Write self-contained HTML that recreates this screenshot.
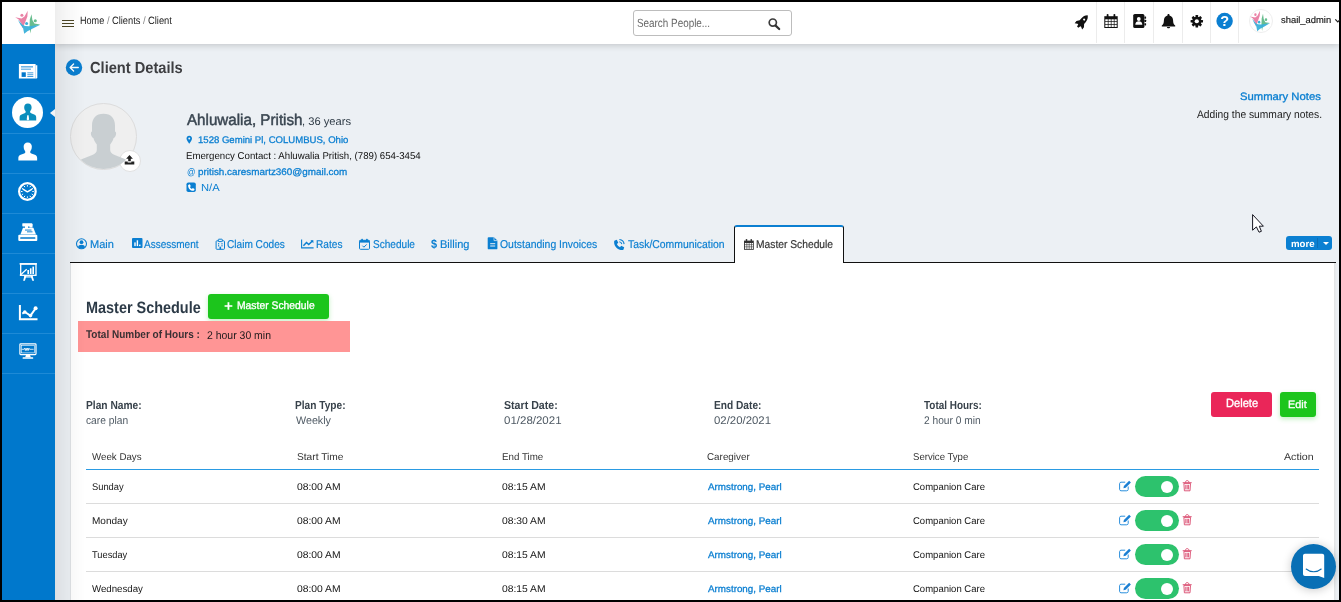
<!DOCTYPE html>
<html lang="en">
<head>
<meta charset="utf-8">
<title>Client Details - Master Schedule</title>
<style>
html,body{margin:0;padding:0}
body{width:1341px;height:602px;overflow:hidden;background:#000;position:relative;font-family:"Liberation Sans",sans-serif}
.abs,.t,#app,#app div{position:absolute}
#app{left:2px;top:2px;width:1337px;height:598px;background:#ecf0f4;overflow:hidden}
/* coordinates inside #app are page coords minus 2 */
#logo{left:0;top:0;width:53px;height:42px;background:#fff}
#side{left:0;top:42px;width:53px;height:556px;background:#0078cc}
#side .sep{left:0;width:53px;height:1px;background:#1e8ad6}
#side .act{left:10px;top:53px;width:31px;height:31px;border-radius:50%;background:#fff}
#side .notch{left:48px;top:65px;width:0;height:0;border-top:4.5px solid transparent;border-bottom:4.5px solid transparent;border-right:5px solid #f1f3f6}
#top{left:52px;top:0;width:1284px;height:42px;background:#fff;border-left:1px solid #d6dce4;box-shadow:0 1px 7px rgba(0,0,0,.2)}
#top .vs{top:0;width:1px;height:41px;background:#ececec}
#search{left:578px;top:8px;width:157px;height:24px;border:1px solid #bdbdbd;border-radius:3px;background:#fff}
#avatar{left:1194px;top:7px;width:22px;height:22px;border-radius:50%;background:#fff;border:1px solid #eee}
#sideshadow{left:53px;top:0;width:30px;height:598px;background:linear-gradient(to right,rgba(0,0,0,.065),rgba(0,0,0,.03) 40%,rgba(0,0,0,0));z-index:5}
#pic{left:68px;top:101px;width:65px;height:65px;border-radius:50%;background:#efefef;border:1px solid #dcdcdc;overflow:hidden}
#upl{left:117px;top:148px;width:20px;height:20px;border-radius:50%;background:#fff;border:1px solid #e1e1e1}
#panel{left:68px;top:261px;width:1263px;height:340px;background:#fff;border-left:1px solid #dfe2e5}
#tabline{left:68px;top:260px;width:1266px;height:1px;background:#111}
#tabact{left:732px;top:223px;width:108px;height:36px;background:#fff;border:1px solid #111;border-top:2px solid #0b7fd1;border-bottom:none;border-radius:3px 3px 0 0}
#more{left:1284px;top:234px;width:46px;height:14px;border-radius:3px;background:#0b80d2}
#more .dv{left:31px;top:2px;width:1px;height:10px;background:#0a6fb8}
#more .cr{left:36.5px;top:6px;width:0;height:0;border-left:3px solid transparent;border-right:3px solid transparent;border-top:3.5px solid #fff}
.btn{border-radius:3px}
#addms{left:206px;top:292px;width:121px;height:25px;background:#1cc51c;box-shadow:0 2px 5px rgba(28,197,28,.28)}
#pink{left:76px;top:319px;width:272px;height:31px;background:#ff9595}
#del{left:1209px;top:390px;width:61px;height:25px;background:#ea2659}
#edit{left:1278px;top:390px;width:36px;height:25px;background:#1cc51c;box-shadow:0 2px 5px rgba(28,197,28,.28)}
#thline{left:84px;top:467px;width:1233px;height:1px;background:#2a9be3}
.rl{left:84px;width:1233px;height:1px;background:#dcdcdc}
.tog{left:1133px;width:44px;height:21px;border-radius:11px;background:#2dc26d}
.tog b{position:absolute;left:25.5px;top:4.5px;width:12.5px;height:12.5px;border-radius:50%;background:#fff}
#rstrip{left:1332px;top:261px;width:3px;height:340px;background:linear-gradient(to right,#e2e3e4,#ecf0f4)}
#chat{left:1289px;top:542px;width:45px;height:45px;border-radius:50%;background:#086fb5;box-shadow:0 1px 10px rgba(0,0,0,.22)}
svg#ic{position:absolute;left:0;top:0;width:1341px;height:602px;pointer-events:none;will-change:transform}
.t{white-space:nowrap;line-height:1;margin:0;padding:0;transform-origin:0 0;text-rendering:geometricPrecision}
#txt{position:absolute;left:0;top:0;width:1341px;height:602px;will-change:transform}
.pb{display:inline-block;width:0;height:0}
</style>
</head>
<body>
<div id="app">
  <div id="side">
    <div class="sep" style="top:49px"></div><div class="sep" style="top:89px"></div><div class="sep" style="top:129px"></div><div class="sep" style="top:169px"></div><div class="sep" style="top:209px"></div><div class="sep" style="top:249px"></div><div class="sep" style="top:289px"></div><div class="sep" style="top:329px"></div>
    <div class="act"></div><div class="notch"></div>
  </div>
  <div id="sideshadow"></div>
  <div id="pic"></div><div id="upl"></div>
  <div id="panel"></div><div id="rstrip"></div>
  <div id="tabline"></div><div id="tabact"></div>
  <div id="more"><div class="dv"></div><div class="cr"></div></div>
  <div id="addms" class="btn"></div>
  <div id="pink"></div>
  <div id="del" class="btn"></div><div id="edit" class="btn"></div>
  <div id="thline"></div>
  <div class="rl" style="top:501px"></div><div class="rl" style="top:535px"></div><div class="rl" style="top:569px"></div>
  <div class="tog" style="top:474px"><b></b></div><div class="tog" style="top:508px"><b></b></div><div class="tog" style="top:542px"><b></b></div><div class="tog" style="top:576px"><b></b></div>
  <div id="top">
    <div class="vs" style="left:1041px"></div><div class="vs" style="left:1069px"></div><div class="vs" style="left:1098px"></div><div class="vs" style="left:1127px"></div><div class="vs" style="left:1155px"></div><div class="vs" style="left:1183px"></div>
    <div id="search"></div>
    <div id="avatar"></div>
  </div>
  <div id="logo"></div>
  <div id="chat"></div>
</div>
<svg id="ic" viewBox="0 0 1341 602">
<!-- logo -->
<g id="lg">
<g opacity=".92">
<polygon fill="#e8789f" points="15.2,17.2 21.6,18.4 24.5,16.6 27.7,10.8 27.4,16.6 25.1,22.4 22.5,28.3 21.6,24.2 18.7,19.5"/>
<circle fill="#e8789f" cx="21.9" cy="15.3" r="1.5"/>
<polygon fill="#5cb886" points="31.5,14.3 32.4,20.1 34.4,23.6 40.2,24.5 35,25.9 31.5,27.1 30.3,33.5 29.5,27.1 29.8,19.5"/>
<circle fill="#5cb886" cx="35.3" cy="20.8" r="1.55"/>
<polygon fill="#2aaad6" opacity=".95" points="17.8,19.8 22.5,24.8 25.1,25.9 29.2,26.2 40.2,24.8 33.3,28.3 27.4,31.2 24.2,33.8 23.1,28.3 20.5,24.8"/>
<circle fill="#2aaad6" cx="26.6" cy="23.6" r="1.5"/>
</g>
</g>
<!-- avatar logo (scaled copy) -->
<use href="#lg" transform="translate(1260 21) scale(.79 .9) translate(-27.7 -22.3)"/>
<!-- hamburger -->
<g stroke="#4d4726" stroke-width="1"><path d="M62 20.5h12M62 23.5h12M62 26.5h12"/></g>
<!-- back circle -->
<circle cx="74" cy="67.5" r="8.2" fill="#0b7fd1"/>
<path d="M78.3 67.5h-8.2M73.6 64l-3.5 3.5 3.5 3.5" fill="none" stroke="#fff" stroke-width="1.3" stroke-linecap="round" stroke-linejoin="round"/>
<!-- search icon -->
<circle cx="772.8" cy="22.6" r="3.6" fill="none" stroke="#3c3c3c" stroke-width="1.7"/>
<path d="M775.6 25.6l3.6 3.4" stroke="#333" stroke-width="2.2" stroke-linecap="round"/>
<!-- rocket -->
<g transform="translate(1082.400 21.600) rotate(40)">
<path fill="#111" d="M0-8.200c2 1.600 2.900 4 2.900 6.600v2.400l2 2.600v2.800l-2.600-1.400h-.9l-.5 2.500h-1.800l-.5-2.500h-.9l-2.600 1.400v-2.800l2-2.600v-2.400c0-2.600 .9-5 2.900-6.600z"/>
<circle cx="0" cy="-2.700" r="1.050" fill="#fff"/>
</g>
<!-- calendar top -->
<g fill="#111">
<path d="M1104.300 16.200h13.400v11.800h-13.400z"/>
<rect x="1106.700" y="14" width="1.800" height="3.600" rx=".8"/><rect x="1113.500" y="14" width="1.800" height="3.600" rx=".8"/>
</g>
<g fill="#fff">
<rect x="1105.300" y="19.300" width="2.500" height="2.000"/><rect x="1108.500" y="19.300" width="2.300" height="2.000"/><rect x="1111.500" y="19.300" width="2.300" height="2.000"/><rect x="1114.500" y="19.300" width="2.200" height="2.000"/>
<rect x="1105.300" y="22.000" width="2.500" height="2.100"/><rect x="1108.500" y="22.000" width="2.300" height="2.100"/><rect x="1111.500" y="22.000" width="2.300" height="2.100"/><rect x="1114.500" y="22.000" width="2.200" height="2.100"/>
<rect x="1105.300" y="24.800" width="2.500" height="2.200"/><rect x="1108.500" y="24.800" width="2.300" height="2.200"/><rect x="1111.500" y="24.800" width="2.300" height="2.200"/><rect x="1114.500" y="24.800" width="2.200" height="2.200"/>
</g>
<!-- address book -->
<rect x="1133.200" y="14" width="11.200" height="14" rx="1.600" fill="#111"/>
<g fill="#111"><rect x="1144.400" y="16.400" width="1.700" height="2.300" rx=".4"/><rect x="1144.400" y="19.800" width="1.700" height="2.300" rx=".4"/><rect x="1144.400" y="23.200" width="1.700" height="2.300" rx=".4"/></g>
<circle cx="1138.800" cy="19" r="1.900" fill="#fff"/>
<path d="M1135.300 24.800c0-2.600 1.500-3.600 3.500-3.600s3.500 1 3.500 3.600z" fill="#fff"/>
<!-- bell -->
<path fill="#111" d="M1168.500 14c.6 0 1 .4 1 1v.4c2.300 .5 3.600 2.400 3.600 5.000 0 2.800 .8 3.900 2.100 5.100v.9h-13.400v-.9c1.300-1.200 2.100-2.300 2.100-5.100 0-2.600 1.300-4.500 3.600-5v-.4c0-.6 .4-1 1-1zM1166.900 26.900h3.200c0 .8-.7 1.400-1.600 1.400s-1.600-.6-1.600-1.400z"/>
<!-- gear -->
<g transform="translate(1196.800 21.250)">
<g fill="#111">
<rect x="-1.300" y="-6.200" width="2.600" height="12.400" rx=".5"/>
<rect x="-1.300" y="-6.200" width="2.600" height="12.400" rx=".5" transform="rotate(45)"/>
<rect x="-1.300" y="-6.200" width="2.600" height="12.400" rx=".5" transform="rotate(90)"/>
<rect x="-1.300" y="-6.200" width="2.600" height="12.400" rx=".5" transform="rotate(135)"/>
<circle r="4.600"/>
</g>
<circle r="2.100" fill="#fff"/>
</g>
<!-- help -->
<circle cx="1224.600" cy="21.050" r="8.200" fill="#0b7fd1"/>
<text x="1224.600" y="26.200" font-family="Liberation Sans, sans-serif" font-size="14.5" font-weight="700" fill="#fff" text-anchor="middle">?</text>
<!-- user caret -->
<path d="M1335.300 19.400l2.500 2.500 2-2" fill="none" stroke="#222" stroke-width="1.200"/>
<!-- sidebar: newspaper -->
<g fill="#fff">
<path d="M18.900 64h16.700v14.500h-16.700z"/><path d="M35.500 65.300h1.800v12.200c0 .6-.4 1-1 1h-.8z"/>
</g>
<g fill="#2f93da">
<rect x="21" y="66.300" width="12" height="1.100"/><rect x="21" y="68.700" width="10" height=".9"/>
<rect x="27.300" y="72.400" width="6" height=".9"/><rect x="27.300" y="74.300" width="6" height=".9"/><rect x="27.300" y="76.100" width="6" height=".9"/>
</g>
<rect x="21.600" y="72.300" width="4.200" height="4.600" fill="#0078cc"/>
<!-- sidebar: active client (teal) -->
<g fill="#0a8ebd">
<path d="M27.900 103.500c2.400 0 3.700 1.500 3.700 3.700 0 1.300-.3 2.600-1.100 3.600-.3 .4-.4 .8-.4 1.200 0 .6 .4 1 1.100 1.300l3 1.200c1.300 .5 2 1.500 2 2.900v3h-16.600v-3c0-1.400 .7-2.400 2-2.900l3-1.200c.7-.3 1.100-.7 1.100-1.300 0-.4-.1-.8-.4-1.200-.8-1-1.100-2.300-1.100-3.600 0-2.200 1.300-3.700 3.700-3.700z"/>
</g>
<path d="M27.200 115.300h1.400l.5 4.100-1.200 1.200-1.200-1.200z" fill="#fff"/>
<!-- sidebar: person -->
<path fill="#fff" d="M27.750 142.600c2.600 0 4.100 1.700 4.100 4.100 0 1.500-.4 2.900-1.200 4-.3 .4-.5 .9-.5 1.300 0 .7 .5 1.100 1.200 1.400l3.500 1.400c1.500 .6 2.300 1.700 2.300 3.300v2.500h-18.800v-2.500c0-1.600 .8-2.700 2.300-3.300l3.500-1.400c.7-.3 1.200-.7 1.200-1.400 0-.4-.2-.9-.5-1.300-.8-1.100-1.200-2.500-1.200-4 0-2.400 1.500-4.100 4.100-4.100z"/>
<!-- sidebar: clock -->
<circle cx="27.400" cy="191.500" r="8.300" fill="none" stroke="#fff" stroke-width="2.200"/>
<g stroke="#fff" stroke-width="1" stroke-linecap="butt">
<path d="M27.400 185.100v1.500M27.400 196.400v1.500M21 191.500h1.500M32.300 191.500h1.500M24.200 186l.7 1.200M30.600 186l-.7 1.200M24.200 197l.7-1.200M30.600 197l-.7-1.200M21.900 188.300l1.200 .7M32.900 188.300l-1.200 .7M21.900 194.700l1.200-.7M32.900 194.700l-1.200-.7"/>
</g>
<path d="M23.300 189.300l4.100 2.500 4.300-2.500" fill="none" stroke="#fff" stroke-width="1.500" stroke-linecap="round" stroke-linejoin="round"/>
<!-- sidebar: cash register -->
<g fill="#fff">
<rect x="22.300" y="223.200" width="10" height="3.200" rx=".6"/><rect x="29.500" y="224" width="3" height="3.600"/>
<rect x="25" y="226" width="3" height="2.200"/>
<path d="M23 227.700h10.400l2.600 6.700h-15.600z"/>
<rect x="18.300" y="234.700" width="19" height="6.200" rx="1"/>
</g>
<g fill="#0078cc"><rect x="20.200" y="237.300" width="15.200" height="1.400" rx=".5"/><rect x="25" y="229.600" width="6.500" height=".9"/><rect x="27" y="231.400" width="5.500" height=".9"/></g>
<!-- sidebar: presentation -->
<g fill="none" stroke="#fff">
<rect x="20.700" y="264" width="15.300" height="11.300" stroke-width="1.300"/>
</g>
<g fill="#fff">
<rect x="19.600" y="263.100" width="17.300" height="1.500"/>
<rect x="27.400" y="270" width="1.600" height="4"/><rect x="29.900" y="268.300" width="1.600" height="5.700"/><rect x="32.400" y="266.600" width="1.600" height="7.400"/>
<path d="M24.600 275.300h2l-1.700 5.500h-1.800zM30.400 275.300h2l1.700 5.500h-1.800z"/>
<rect x="24" y="276.300" width="8.600" height="1.200"/>
</g>
<path d="M19.900 275.500l6.800-6.300" stroke="#fff" stroke-width="1.200"/>
<!-- sidebar: line chart -->
<path d="M19.900 305v14.300h17.600" fill="none" stroke="#fff" stroke-width="2"/>
<path d="M22.300 313.600l2.500-1.600 5.700 3.600 5.100-7.200" fill="none" stroke="#fff" stroke-width="1.900" stroke-linejoin="round"/>
<g fill="#fff"><circle cx="24.800" cy="312" r="1.800"/><circle cx="30.500" cy="315.600" r="1.800"/><circle cx="35.600" cy="308.300" r="2"/></g>
<!-- sidebar: monitor -->
<rect x="19.900" y="343.800" width="16.100" height="10.800" rx=".8" fill="none" stroke="#fff" stroke-width="1.200"/>
<rect x="21.600" y="345.500" width="12.700" height="7.400" fill="none" stroke="#fff" stroke-width=".6"/>
<path d="M21.600 349.300h2.500l.6-1.200 .7 2.400 .7-2.400 .7 2.400 .7-2.400 .7 2.400 .7-2.400 .7 1.200h4" fill="none" stroke="#fff" stroke-width=".8"/>
<path d="M26 355h4l.8 2.300h-5.600z" fill="#fff"/><rect x="22.600" y="357.300" width="10.600" height="1.400" rx=".5" fill="#fff"/>
<!-- profile silhouette -->
<g id="sil">
<clipPath id="cp"><circle cx="103.500" cy="136.500" r="32.500"/></clipPath>
<g clip-path="url(#cp)" fill="#c9cfd2">
<path d="M103.500 113.700c7.500 0 11.500 4.600 11.500 11.700v6.200c1.200 .4 1.400 2.100 .7 4-.5 1.500-1.300 2.400-2.100 2.500-.7 2.700-1.900 4.800-3.400 6.300v5.600c0 2.300 1.400 3.700 4.500 4.900l9.500 3.800c4 1.600 6.300 4 6.300 9v4h-54v-4c0-5 2.300-7.400 6.300-9l9.500-3.800c3.100-1.200 4.500-2.600 4.500-4.900v-5.600c-1.500-1.500-2.700-3.600-3.400-6.300-.8-.1-1.600-1-2.100-2.500-.7-1.900-.5-3.600 .7-4v-6.200c0-7.100 4-11.700 11.500-11.700z"/>
</g>
</g>
<!-- upload icon -->
<g fill="#222">
<path d="M129.500 155l3.400 3.700h-2.100v2.600h-2.600v-2.600h-2.100z"/>
<path d="M124.700 161.600h3v.8h3.600v-.8h3v3h-9.600z"/>
</g>
<!-- contact icons -->
<path fill="#0b7fd1" d="M189.250 135.800c1.600 0 2.750 1.150 2.750 2.700 0 1.900-2.750 5.200-2.750 5.200s-2.750-3.300-2.750-5.200c0-1.550 1.150-2.700 2.750-2.700z"/>
<circle cx="189.250" cy="138.500" r="1" fill="#ecf0f4"/>
<rect x="186.500" y="182.500" width="9.300" height="9.500" rx="1.800" fill="#0b7fd1"/>
<path d="M188.600 184.700l1.300-.4 .9 1.900-.9 .7c.4 1 1.100 1.700 2.100 2.100l.7-.9 1.900 .9-.4 1.300c-.1 .3-.4 .5-.8 .5-3 0-5.300-2.300-5.300-5.300 0-.4 .2-.7 .5-.8z" fill="#fff"/>
<!-- tab icons -->
<g fill="none" stroke="#0b7fd1">
<circle cx="81.500" cy="243.800" r="5" stroke-width="1.100"/>
</g>
<circle cx="81.500" cy="242.200" r="1.900" fill="#0b7fd1"/>
<path d="M78 247.300c.3-1.800 1.700-2.500 3.500-2.500s3.200 .7 3.500 2.500c-1 .9-2.200 1.300-3.500 1.300s-2.500-.4-3.500-1.300z" fill="#0b7fd1"/>
<!-- assessment -->
<rect x="132" y="237.900" width="10.500" height="10.100" rx="1" fill="#0b7fd1"/>
<g fill="#fff"><rect x="134.300" y="242.400" width="1.400" height="3.700"/><rect x="136.700" y="240.300" width="1.400" height="5.800"/><rect x="139.100" y="244.600" width="1.400" height="1.500"/></g>
<!-- claim codes (clipboard/hospital) -->
<g fill="none" stroke="#0b7fd1" stroke-width="1">
<rect x="216.100" y="240.800" width="8.400" height="8.500" rx=".8"/>
<rect x="218.300" y="239.200" width="4" height="2.400" rx=".5" fill="#ecf0f4"/>
</g>
<g fill="#0b7fd1"><rect x="218" y="243.200" width="1.200" height="1.200"/><rect x="221.400" y="243.200" width="1.200" height="1.200"/><rect x="218" y="245.200" width="1.200" height="1.200"/><rect x="221.400" y="245.200" width="1.200" height="1.200"/><rect x="219.500" y="246.700" width="1.600" height="2.600"/></g>
<!-- rates line chart -->
<path d="M301.600 239.500v8.400h12" fill="none" stroke="#0b7fd1" stroke-width="1.100"/>
<path d="M303.400 245.800l3.100-3.300 2.200 2 3.900-3.800" fill="none" stroke="#0b7fd1" stroke-width="1.500"/>
<path d="M310.400 240.200h3v3z" fill="#0b7fd1"/>
<!-- schedule calendar check -->
<rect x="359.500" y="240.300" width="10" height="9" rx="1" fill="none" stroke="#0b7fd1" stroke-width="1"/>
<rect x="359.500" y="240.300" width="10" height="2.300" fill="#0b7fd1"/>
<g fill="#0b7fd1"><rect x="361.400" y="238.800" width="1.500" height="2.600" rx=".5"/><rect x="366.100" y="238.800" width="1.500" height="2.600" rx=".5"/></g>
<path d="M362.400 245.700l1.500 1.500 2.800-2.800" fill="none" stroke="#0b7fd1" stroke-width="1"/>
<!-- outstanding invoices doc -->
<path d="M488.600 237.200h5.400l3.400 3.400v7.800c0 .5-.4 .9-.9 .9h-7.900c-.5 0-.9-.4-.9-.9v-10.300c0-.5 .4-.9 .9-.9z" fill="#0b7fd1"/>
<path d="M494 237.200v3.400h3.400" fill="none" stroke="#ecf0f4" stroke-width=".7"/>
<g fill="#ecf0f4"><rect x="490.200" y="243.200" width="5" height="1"/><rect x="490.200" y="245.500" width="5" height="1"/></g>
<!-- task/comm phone -->
<path d="M614.800 240.400l2-.6 1.500 3-1.400 1.200c.7 1.500 1.600 2.500 3.100 3.200l1.200-1.400 3 1.500-.6 2c-.2 .6-.7 .8-1.300 .8-4.600 0-8.200-3.600-8.200-8.200 0-.7 .2-1.200 .7-1.500z" fill="#0b7fd1"/>
<path d="M619.300 241.800c1.300 .2 2.300 1.100 2.500 2.400M619.400 239.500c2.500 .3 4.400 2.100 4.700 4.600" fill="none" stroke="#0b7fd1" stroke-width="1.100"/>
<!-- master schedule tab calendar -->
<g fill="#333">
<path d="M744 240.600h9.800v9.200h-9.800z"/>
<rect x="745.800" y="239" width="1.400" height="2.700" rx=".6"/><rect x="750.600" y="239" width="1.400" height="2.700" rx=".6"/>
</g>
<g fill="#fff">
<rect x="744.900" y="243" width="1.700" height="1.500"/><rect x="747.200" y="243" width="1.600" height="1.500"/><rect x="749.400" y="243" width="1.600" height="1.500"/><rect x="751.600" y="243" width="1.400" height="1.500"/>
<rect x="744.900" y="245.100" width="1.700" height="1.500"/><rect x="747.200" y="245.100" width="1.600" height="1.500"/><rect x="749.400" y="245.100" width="1.600" height="1.500"/><rect x="751.600" y="245.100" width="1.400" height="1.500"/>
<rect x="744.900" y="247.200" width="1.700" height="1.700"/><rect x="747.200" y="247.200" width="1.600" height="1.700"/><rect x="749.400" y="247.200" width="1.600" height="1.700"/><rect x="751.600" y="247.200" width="1.400" height="1.700"/>
</g>
<!-- mouse cursor -->
<path d="M1252.600 214.600V230.200L1256.400 226.900L1259 232.200L1261.400 231.300L1259.300 226.200H1263.400Z" fill="#fff" stroke="#15151f" stroke-width="1" stroke-linejoin="miter"/>
<!-- row action icons -->
<g id="ra">
<path d="M1128.200 486.500v2.900c0 .8-.6 1.400-1.400 1.400h-5.800c-.8 0-1.400-.6-1.400-1.400v-5.800c0-.8 .6-1.400 1.400-1.400h4.200" fill="none" stroke="#2a8fdc" stroke-width="1"/>
<path d="M1123.400 488.200l.5-2.300 5.200-5.200 1.800 1.800-5.200 5.200z" fill="#1b7fd3"/>
<g fill="none" stroke="#d9476c" stroke-width=".9">
<path d="M1183.900 483.400h6.600l-.5 7.400h-5.600z"/>
<path d="M1182.700 482.700h9M1185.500 482.500c0-1.200 .6-1.900 1.700-1.900s1.700 .7 1.700 1.900M1185.800 484.800v4.600M1187.200 484.800v4.600M1188.600 484.800v4.600"/>
</g>
</g>
<use href="#ra" y="34"/><use href="#ra" y="68"/><use href="#ra" y="102"/>
<!-- chat widget -->
<path d="M1305 553.800h17.200c1.100 0 2 .9 2 2v22.100l-5.500-2h-13.700c-1.100 0-2-.9-2-2v-18.100c0-1.100 .9-2 2-2z" fill="#fff"/>
<path d="M1306.200 569c2.200 1.900 4.700 2.700 7.500 2.700s5.300-.8 7.500-2.700" fill="none" stroke="#0a6eb3" stroke-width="1.100" stroke-linecap="round"/>

</svg>
<div id="txt">
<span class="t" id="t0" style="left:80.24px;top:16.00px;font-size:10.6px;font-weight:400;color:#222;transform:scaleX(0.8579)">Home</span>
<span class="t" id="t1" style="left:107.40px;top:16.00px;font-size:10.6px;font-weight:400;color:#888;transform:scaleX(0.8804)">/</span>
<span class="t" id="t2" style="left:112.00px;top:16.00px;font-size:10.6px;font-weight:400;color:#222;transform:scaleX(0.8766)">Clients</span>
<span class="t" id="t3" style="left:143.00px;top:16.00px;font-size:10.6px;font-weight:400;color:#888;transform:scaleX(0.9143)">/</span>
<span class="t" id="t4" style="left:147.90px;top:16.00px;font-size:10.6px;font-weight:400;color:#222;transform:scaleX(0.8821)">Client</span>
<span class="t" id="t5" style="left:637.18px;top:18.00px;font-size:11.9px;font-weight:400;color:#666;transform:scaleX(0.8311)">Search People...</span>
<span class="t" id="t6" style="left:1280.75px;top:16.00px;font-size:9.3px;font-weight:400;color:#111;transform:scaleX(1.0104);-webkit-text-stroke:0.15px #111">shail_admin</span>
<span class="t" id="t7" style="left:89.60px;top:61.00px;font-size:16px;font-weight:700;color:#3d3e41;transform:scaleX(0.9152)">Client Details</span>
<span class="t" id="t8" style="left:186.50px;top:113.00px;font-size:15.6px;font-weight:400;color:#3a4651;transform:scaleX(0.9726);-webkit-text-stroke:0.47px #3a4651">Ahluwalia, Pritish</span>
<span class="t" id="t9" style="left:301.62px;top:117.00px;font-size:11px;font-weight:400;color:#2f3b46;transform:scaleX(1.0144)">, 36 years</span>
<span class="t" id="t10" style="left:198.01px;top:136.00px;font-size:9.6px;font-weight:400;color:#0b7fd1;transform:scaleX(0.9962);-webkit-text-stroke:0.29px #0b7fd1">1528 Gemini Pl, COLUMBUS, Ohio</span>
<span class="t" id="t11" style="left:185.62px;top:152.00px;font-size:9.9px;font-weight:400;color:#111;transform:scaleX(0.9783)">Emergency Contact : Ahluwalia Pritish, (789) 654-3454</span>
<span class="t" id="t12" style="left:186.50px;top:168.00px;font-size:9.6px;font-weight:400;color:#0b7fd1;transform:scaleX(0.8718)">@</span>
<span class="t" id="t13" style="left:198.43px;top:168.00px;font-size:9.6px;font-weight:400;color:#0b7fd1;transform:scaleX(1.0282);-webkit-text-stroke:0.29px #0b7fd1">pritish.caresmartz360@gmail.com</span>
<span class="t" id="t14" style="left:200.62px;top:184.00px;font-size:10.3px;font-weight:400;color:#0b7fd1;transform:scaleX(1.0887)">N/A</span>
<span class="t" id="t15" style="left:1240.23px;top:92.00px;font-size:10.7px;font-weight:400;color:#0b7fd1;transform:scaleX(1.0548);-webkit-text-stroke:0.32px #0b7fd1">Summary Notes</span>
<span class="t" id="t16" style="left:1196.84px;top:110.00px;font-size:11px;font-weight:400;color:#222;transform:scaleX(0.9336)">Adding the summary notes.</span>
<span class="t" id="t17" style="left:89.86px;top:240.00px;font-size:11.3px;font-weight:400;color:#0b7fd1;transform:scaleX(0.9768);-webkit-text-stroke:0.18px #0b7fd1">Main</span>
<span class="t" id="t18" style="left:144.12px;top:240.00px;font-size:11.3px;font-weight:400;color:#0b7fd1;transform:scaleX(0.8854);-webkit-text-stroke:0.18px #0b7fd1">Assessment</span>
<span class="t" id="t19" style="left:226.73px;top:240.00px;font-size:11.3px;font-weight:400;color:#0b7fd1;transform:scaleX(0.8939);-webkit-text-stroke:0.18px #0b7fd1">Claim Codes</span>
<span class="t" id="t20" style="left:316.33px;top:240.00px;font-size:11.3px;font-weight:400;color:#0b7fd1;transform:scaleX(0.8965);-webkit-text-stroke:0.18px #0b7fd1">Rates</span>
<span class="t" id="t21" style="left:372.72px;top:240.00px;font-size:11.3px;font-weight:400;color:#0b7fd1;transform:scaleX(0.8909);-webkit-text-stroke:0.18px #0b7fd1">Schedule</span>
<span class="t" id="t22" style="left:431.05px;top:238.00px;font-size:12.2px;font-weight:700;color:#0b7fd1;transform:scaleX(0.8995)">$</span>
<span class="t" id="t23" style="left:439.62px;top:240.00px;font-size:11.3px;font-weight:400;color:#0b7fd1;transform:scaleX(0.9777);-webkit-text-stroke:0.18px #0b7fd1">Billing</span>
<span class="t" id="t24" style="left:499.75px;top:240.00px;font-size:11.3px;font-weight:400;color:#0b7fd1;transform:scaleX(0.9225);-webkit-text-stroke:0.18px #0b7fd1">Outstanding Invoices</span>
<span class="t" id="t25" style="left:627.80px;top:240.00px;font-size:11.3px;font-weight:400;color:#0b7fd1;transform:scaleX(0.9209);-webkit-text-stroke:0.18px #0b7fd1">Task/Communication</span>
<span class="t" id="t26" style="left:756.41px;top:240.00px;font-size:11.3px;font-weight:400;color:#333;transform:scaleX(0.9089);-webkit-text-stroke:0.18px #333">Master Schedule</span>
<span class="t" id="t27" style="left:1291.27px;top:240.00px;font-size:9.6px;font-weight:700;color:#fff;transform:scaleX(1.0068)">more</span>
<span class="t" id="t28" style="left:85.80px;top:300.00px;font-size:16.4px;font-weight:700;color:#2c3a47;transform:scaleX(0.8804)">Master Schedule</span>
<span class="t" id="t29" style="left:223.60px;top:299.00px;font-size:15px;font-weight:700;color:#fff;transform:scaleX(1.0153)">+</span>
<span class="t" id="t30" style="left:236.80px;top:301.00px;font-size:11px;font-weight:400;color:#fff;transform:scaleX(0.9406);-webkit-text-stroke:0.33px #fff">Master Schedule</span>
<span class="t" id="t31" style="left:86.24px;top:330.00px;font-size:11.2px;font-weight:700;color:#3a3033;transform:scaleX(0.8952)">Total Number of Hours :</span>
<span class="t" id="t32" style="left:207.18px;top:331.00px;font-size:11.2px;font-weight:400;color:#1f1a1c;transform:scaleX(0.9348)">2 hour 30 min</span>
<span class="t" id="t33" style="left:86.10px;top:400.00px;font-size:11.6px;font-weight:700;color:#38424b;transform:scaleX(0.8808)">Plan Name:</span>
<span class="t" id="t34" style="left:86.09px;top:416.00px;font-size:11px;font-weight:400;color:#4f5a64;transform:scaleX(0.9305)">care plan</span>
<span class="t" id="t35" style="left:295.11px;top:400.00px;font-size:11.6px;font-weight:700;color:#38424b;transform:scaleX(0.8751)">Plan Type:</span>
<span class="t" id="t36" style="left:295.70px;top:416.00px;font-size:11px;font-weight:400;color:#4f5a64;transform:scaleX(0.9756)">Weekly</span>
<span class="t" id="t37" style="left:504.40px;top:400.00px;font-size:11.6px;font-weight:700;color:#38424b;transform:scaleX(0.9153)">Start Date:</span>
<span class="t" id="t38" style="left:504.09px;top:416.00px;font-size:11px;font-weight:400;color:#4f5a64;transform:scaleX(1.0456)">01/28/2021</span>
<span class="t" id="t39" style="left:713.63px;top:400.00px;font-size:11.6px;font-weight:700;color:#38424b;transform:scaleX(0.8765)">End Date:</span>
<span class="t" id="t40" style="left:713.99px;top:416.00px;font-size:11px;font-weight:400;color:#4f5a64;transform:scaleX(1.0358)">02/20/2021</span>
<span class="t" id="t41" style="left:924.06px;top:400.00px;font-size:11.6px;font-weight:700;color:#38424b;transform:scaleX(0.8574)">Total Hours:</span>
<span class="t" id="t42" style="left:924.02px;top:416.00px;font-size:11px;font-weight:400;color:#4f5a64;transform:scaleX(0.9273)">2 hour 0 min</span>
<span class="t" id="t43" style="left:1225.90px;top:398.00px;font-size:11.9px;font-weight:400;color:#fff;transform:scaleX(0.9342);-webkit-text-stroke:0.36px #fff">Delete</span>
<span class="t" id="t44" style="left:1287.98px;top:400.00px;font-size:10.8px;font-weight:400;color:#fff;transform:scaleX(1.0022);-webkit-text-stroke:0.32px #fff">Edit</span>
<span class="t" id="t45" style="left:92.34px;top:453.00px;font-size:9.9px;font-weight:400;color:#333;transform:scaleX(0.9851)">Week Days</span>
<span class="t" id="t46" style="left:296.62px;top:453.00px;font-size:9.9px;font-weight:400;color:#333;transform:scaleX(1.0315)">Start Time</span>
<span class="t" id="t47" style="left:501.88px;top:453.00px;font-size:9.9px;font-weight:400;color:#333;transform:scaleX(0.9889)">End Time</span>
<span class="t" id="t48" style="left:707.11px;top:453.00px;font-size:9.9px;font-weight:400;color:#333;transform:scaleX(0.9985)">Caregiver</span>
<span class="t" id="t49" style="left:912.73px;top:453.00px;font-size:9.9px;font-weight:400;color:#333;transform:scaleX(0.9718)">Service Type</span>
<span class="t" id="t50" style="left:1284.07px;top:453.00px;font-size:9.9px;font-weight:400;color:#333;transform:scaleX(1.0788)">Action</span>
<span class="t" id="t51" style="left:91.58px;top:483.00px;font-size:9.8px;font-weight:400;color:#151515;transform:scaleX(0.9531)">Sunday</span>
<span class="t" id="t52" style="left:297.00px;top:483.00px;font-size:9.8px;font-weight:400;color:#151515;transform:scaleX(1.0533)">08:00 AM</span>
<span class="t" id="t53" style="left:502.02px;top:483.00px;font-size:9.8px;font-weight:400;color:#151515;transform:scaleX(1.0533)">08:15 AM</span>
<span class="t" id="t54" style="left:707.66px;top:483.00px;font-size:9.6px;font-weight:400;color:#0b7fd1;transform:scaleX(1.0237);-webkit-text-stroke:0.29px #0b7fd1">Armstrong, Pearl</span>
<span class="t" id="t55" style="left:913.22px;top:483.00px;font-size:9.8px;font-weight:400;color:#151515;transform:scaleX(0.9716)">Companion Care</span>
<span class="t" id="t56" style="left:91.53px;top:517.00px;font-size:9.8px;font-weight:400;color:#151515;transform:scaleX(1.0244)">Monday</span>
<span class="t" id="t57" style="left:297.00px;top:517.00px;font-size:9.8px;font-weight:400;color:#151515;transform:scaleX(1.0533)">08:00 AM</span>
<span class="t" id="t58" style="left:502.02px;top:517.00px;font-size:9.8px;font-weight:400;color:#151515;transform:scaleX(1.0533)">08:30 AM</span>
<span class="t" id="t59" style="left:707.66px;top:517.00px;font-size:9.6px;font-weight:400;color:#0b7fd1;transform:scaleX(1.0237);-webkit-text-stroke:0.29px #0b7fd1">Armstrong, Pearl</span>
<span class="t" id="t60" style="left:913.22px;top:517.00px;font-size:9.8px;font-weight:400;color:#151515;transform:scaleX(0.9716)">Companion Care</span>
<span class="t" id="t61" style="left:92.47px;top:551.00px;font-size:9.8px;font-weight:400;color:#151515;transform:scaleX(0.9460)">Tuesday</span>
<span class="t" id="t62" style="left:297.00px;top:551.00px;font-size:9.8px;font-weight:400;color:#151515;transform:scaleX(1.0533)">08:00 AM</span>
<span class="t" id="t63" style="left:502.02px;top:551.00px;font-size:9.8px;font-weight:400;color:#151515;transform:scaleX(1.0533)">08:15 AM</span>
<span class="t" id="t64" style="left:707.66px;top:551.00px;font-size:9.6px;font-weight:400;color:#0b7fd1;transform:scaleX(1.0237);-webkit-text-stroke:0.29px #0b7fd1">Armstrong, Pearl</span>
<span class="t" id="t65" style="left:913.22px;top:551.00px;font-size:9.8px;font-weight:400;color:#151515;transform:scaleX(0.9716)">Companion Care</span>
<span class="t" id="t66" style="left:91.80px;top:585.00px;font-size:9.8px;font-weight:400;color:#151515;transform:scaleX(0.9878)">Wednesday</span>
<span class="t" id="t67" style="left:297.00px;top:585.00px;font-size:9.8px;font-weight:400;color:#151515;transform:scaleX(1.0533)">08:00 AM</span>
<span class="t" id="t68" style="left:502.02px;top:585.00px;font-size:9.8px;font-weight:400;color:#151515;transform:scaleX(1.0533)">08:15 AM</span>
<span class="t" id="t69" style="left:707.66px;top:585.00px;font-size:9.6px;font-weight:400;color:#0b7fd1;transform:scaleX(1.0237);-webkit-text-stroke:0.29px #0b7fd1">Armstrong, Pearl</span>
<span class="t" id="t70" style="left:913.22px;top:585.00px;font-size:9.8px;font-weight:400;color:#151515;transform:scaleX(0.9716)">Companion Care</span>
</div>
</body>
</html>
